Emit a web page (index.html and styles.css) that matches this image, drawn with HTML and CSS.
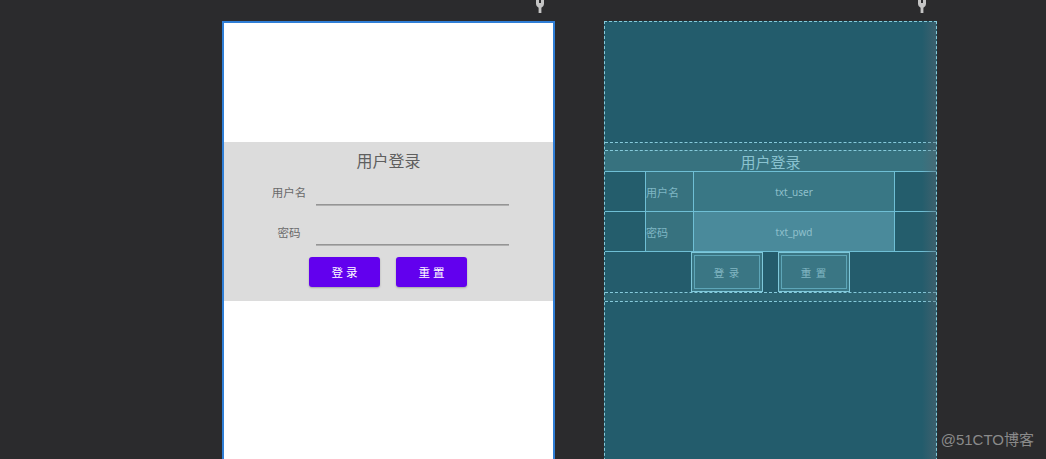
FILE: index.html
```html
<!DOCTYPE html>
<html lang="zh">
<head>
  <meta charset="UTF-8" />
  <meta name="viewport" content="width=device-width, initial-scale=1.0" />
  <title>用户登录 - 布局预览</title>
  <link rel="stylesheet" href="styles.css">
</head>
<body>
  <div class="stage">
    <div class="column">
      <div class="pin-row">
        <svg class="pin" width="8" height="13" viewBox="0 0 8 13"><path d="M0 0 H3 V3 H5 V0 H8 V4 A4 4 0 0 1 5.4 7.7 V13 H2.6 V7.7 A4 4 0 0 1 0 4 Z" /></svg>
      </div>
      <div class="phone design">
        <div class="top-space"></div>
        <div class="form">
          <div class="gap-row"></div>
          <div class="title-row">用户登录</div>
          <div class="field-row">
            <div class="side"></div>
            <div class="label">用户名</div>
            <div class="input"><span class="line"></span></div>
            <div class="side"></div>
          </div>
          <div class="field-row">
            <div class="side"></div>
            <div class="label">密码</div>
            <div class="input"><span class="line"></span></div>
            <div class="side"></div>
          </div>
          <div class="btn-row">
            <div class="btn"><span class="btn-face">登 录</span></div>
            <div class="btn"><span class="btn-face">重 置</span></div>
          </div>
          <div class="gap-row"></div>
        </div>
        <div class="bottom-space"></div>
      </div>
    </div>

    <div class="column">
      <div class="pin-row">
        <svg class="pin" width="8" height="13" viewBox="0 0 8 13"><path d="M0 0 H3 V3 H5 V0 H8 V4 A4 4 0 0 1 5.4 7.7 V13 H2.6 V7.7 A4 4 0 0 1 0 4 Z" /></svg>
      </div>
      <div class="phone blueprint">
        <div class="top-space"></div>
        <div class="form">
          <div class="gap-row top"></div>
          <div class="title-row">用户登录</div>
          <div class="field-row">
            <div class="side"></div>
            <div class="label">用户名</div>
            <div class="input">txt_user</div>
            <div class="side"></div>
          </div>
          <div class="field-row">
            <div class="side"></div>
            <div class="label">密码</div>
            <div class="input pwd">txt_pwd</div>
            <div class="side"></div>
          </div>
          <div class="btn-row">
            <div class="btn"><span class="btn-face">登 录</span></div>
            <div class="btn"><span class="btn-face">重 置</span></div>
          </div>
          <div class="gap-row"></div>
        </div>
        <div class="bottom-space"></div>
      </div>
    </div>
  </div>

  <div class="watermark">@51CTO博客</div>
</body>
</html>
```

FILE: styles.css
```css
body {
  margin: 0;
  height: 459px;
  overflow: hidden;
  background-color: #2b2b2d;
  font-family: "Noto Sans", "Noto Sans CJK SC", sans-serif;
  position: relative;
}
.stage {
  display: flex;
  gap: 49px;
  padding-left: 222px;
}
.column {
  width: 333px;
  display: flex;
  flex-direction: column;
}
.pin-row {
  height: 21px;
  display: flex;
  justify-content: flex-end;
  align-items: flex-start;
  padding-right: 11px;
}
.pin path {
  fill: #c4c4c4;
}

.phone {
  box-sizing: border-box;
  height: 460px;
  display: flex;
  flex-direction: column;
}
.top-space {
  height: 119px;
}
.gap-row {
  height: 8px;
}
.title-row {
  height: 22px;
  display: flex;
  align-items: center;
  justify-content: center;
  font-size: 16px;
}
.field-row {
  height: 40px;
  display: grid;
  grid-template-columns: 41px 48px 1fr 41px;
}
.label {
  display: flex;
  align-items: center;
  font-size: 11.5px;
}
.btn-row {
  height: 41px;
  display: flex;
  justify-content: center;
  gap: 15px;
}
.btn {
  width: 72px;
  box-sizing: border-box;
  display: flex;
}
.btn-face {
  flex: 1;
  display: flex;
  align-items: center;
  justify-content: center;
  font-size: 11.5px;
}
.bottom-space {
  flex: 1;
}

/* design view */
.design {
  background: #fff;
  border: 2px solid #2f7ed6;
  border-bottom: none;
}
.design .form {
  background: #dcdcdc;
}
.design .title-row {
  color: #5f5f5f;
  padding-bottom: 2px;
  box-sizing: border-box;
}
.design .label {
  justify-content: center;
  color: #6a6a6a;
  padding-bottom: 1px;
}
.design .input {
  display: flex;
  align-items: flex-end;
  padding: 0 3px 6px;
}
.design .line {
  flex: 1;
  height: 1px;
  background: #959595;
  border-bottom: 0.5px solid #b0b0b0;
}
.design .btn {
  padding: 5px 1px 6px 0;
}
.design .btn-face {
  background: #6200ee;
  color: #fff;
  border-radius: 3px;
  box-shadow: 0 1px 2px rgba(0,0,0,0.25);
}

/* blueprint view */
.blueprint {
  background: #235c6c;
  border: 1px dashed #86cadb;
  border-bottom: none;
  position: relative;
}
.blueprint::after {
  content: "";
  position: absolute;
  top: 0;
  right: 0;
  bottom: 0;
  width: 14px;
  background: linear-gradient(to right, rgba(90,100,110,0), rgba(90,100,110,0.45));
  pointer-events: none;
}
.blueprint .top-space {
  height: 120px;
}
.blueprint .form {
  border-top: 1px dashed #86cadb;
  border-bottom: 1px dashed #86cadb;
}
.blueprint .gap-row {
  background: #2c6472;
}
.blueprint .gap-row.top {
  height: 7px;
}
.blueprint .title-row {
  background: #37727f;
  color: #8ac3d0;
  border-top: 1px dashed #86cadb;
  border-bottom: 1px solid #6fbfd5;
  height: 20px;
  font-size: 15px;
}
.blueprint .field-row {
  border-bottom: 1px solid #6fbfd5;
  height: 39px;
}
.blueprint .side {
  background: #245d6c;
}
.blueprint .label {
  background: #37727f;
  color: #7fb6c4;
  border-left: 1px solid #6fbfd5;
  border-right: 1px solid #6fbfd5;
  font-size: 11px;
  margin-left: -1px;
}
.blueprint .input {
  background: #397785;
  color: #8fc0cc;
  font-size: 10px;
  display: flex;
  align-items: center;
  justify-content: center;
  border-right: 1px solid #6fbfd5;
}
.blueprint .input.pwd {
  background: #4a8a9b;
}
.blueprint .btn-row {
  background: #245c6c;
  border-bottom: 1px dashed #86cadb;
  height: 40px;
}
.blueprint .btn {
  background: #3a7684;
  border: 1px solid #7fc8da;
  padding: 2px;
}
.blueprint .btn-face {
  border: 1px solid #5ea6b8;
  color: #82b6c3;
  font-size: 10.5px;
  letter-spacing: 1px;
}

.watermark {
  position: absolute;
  right: 12px;
  bottom: 10px;
  color: #8a8a8a;
  font-size: 15px;
  font-family: "Liberation Sans", "Noto Sans CJK SC", sans-serif;
}
```
